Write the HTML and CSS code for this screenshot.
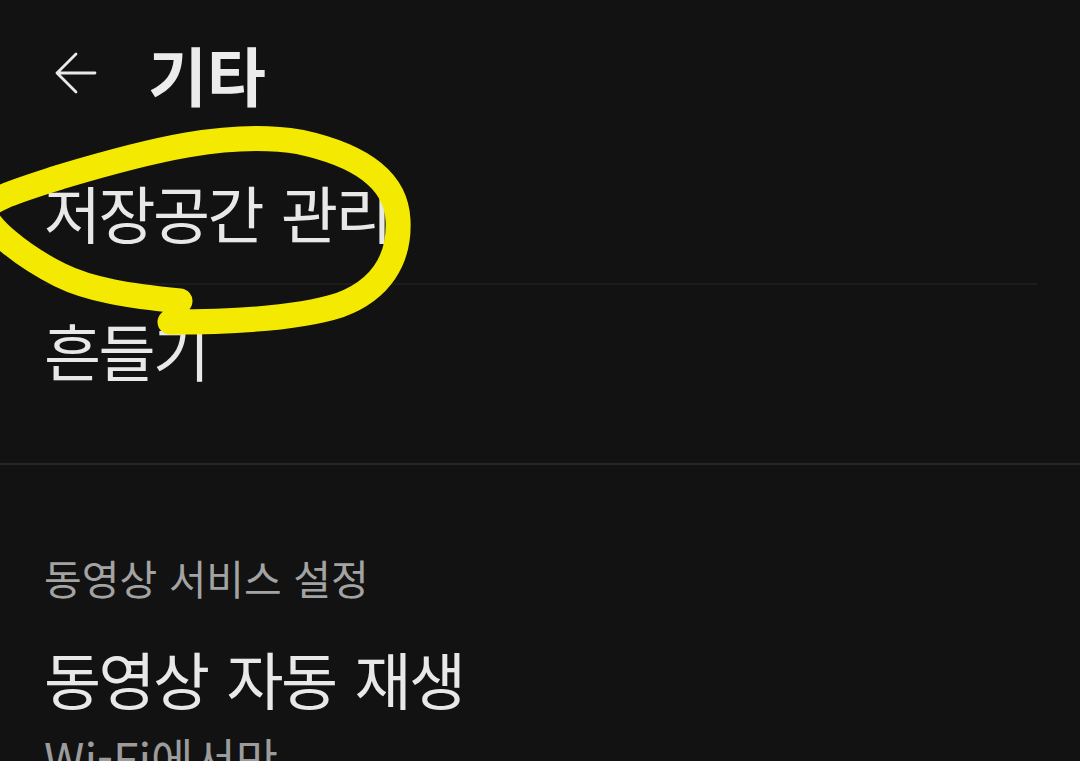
FILE: index.html
```html
<!DOCTYPE html>
<html lang="ko">
<head>
<meta charset="utf-8">
<link rel="stylesheet" href="styles.css">
</head>
<body>
<div class="screen">
  <header class="appbar">
    <button class="back" aria-label="뒤로">
      <svg width="48" height="48" viewBox="0 0 48 48"><path d="M45 24H7M26 5L7 24l19 19" fill="none" stroke="#e9e9e9" stroke-width="2.8" stroke-linecap="round" stroke-linejoin="round"/></svg>
    </button>
    <h1 class="title">기타</h1>
  </header>
  <section class="group first">
    <div class="item item-storage"><span class="label">저장공간 관리</span></div>
    <div class="divider"></div>
    <div class="item item-shake"><span class="label">흔들기</span></div>
  </section>
  <div class="section-divider"></div>
  <section class="group">
    <div class="section-title">동영상 서비스 설정</div>
    <div class="item two-line">
      <span class="label">동영상 자동 재생</span>
      <span class="sub">Wi-Fi에서만</span>
    </div>
  </section>
  <svg class="marker" width="1080" height="761" viewBox="0 0 1080 761">
    <path d="M170 322 C230 322 300 318 340 305 C380 290 400 260 398 220 C396 180 360 155 300 142 C230 130 150 150 60 177 C20 190 -15 200 -15 212 C-15 225 20 255 60 275 C90 290 130 296 180 301" fill="none" stroke="#f4e900" stroke-width="25" stroke-linecap="round" stroke-linejoin="round"/>
  </svg>
</div>
</body>
</html>
```
FILE: styles.css
```css
html, body {
  margin: 0;
  padding: 0;
  background: #121212;
}
.screen {
  position: relative;
  width: 1080px;
  height: 761px;
  overflow: hidden;
  font-family: "Noto Sans CJK KR", "Noto Sans", sans-serif;
  color: #e8e8e8;
}
.appbar {
  height: 146px;
  display: flex;
  align-items: center;
  padding-left: 50px;
}
.back {
  background: none;
  border: 0;
  padding: 0;
  width: 48px;
  height: 48px;
  display: flex;
}
.title {
  margin: 0 0 0 50px;
  font-size: 64px;
  font-weight: 700;
  line-height: 1;
  letter-spacing: 0;
  color: #ececec;
}
.item {
  display: flex;
  align-items: center;
  padding-left: 44px;
}
.label {
  font-size: 62px;
  line-height: 1.2;
  letter-spacing: -2.5px;
  word-spacing: 4px;
  color: #e8e8e8;
}
.item-storage { height: 133px; padding-bottom: 4px; }
.item-shake { height: 130px; }
.first { padding-bottom: 48px; }
.divider {
  height: 2px;
  margin: 0 43px 0 44px;
  background: #1c1c1c;
}
.section-divider {
  height: 2px;
  background: #262626;
}
.section-title {
  padding: 88px 0 0 44px;
  font-size: 41px;
  line-height: 1.2;
  color: #a3a3a3;
}
.two-line {
  flex-direction: column;
  align-items: flex-start;
  padding-top: 30px;
}
.two-line .label {
  line-height: 92px;
}
.sub {
  margin-top: 6px;
  font-size: 46px;
  line-height: 1.2;
  color: #9c9c9c;
}
.marker {
  position: absolute;
  left: 0;
  top: 0;
  pointer-events: none;
}
```
